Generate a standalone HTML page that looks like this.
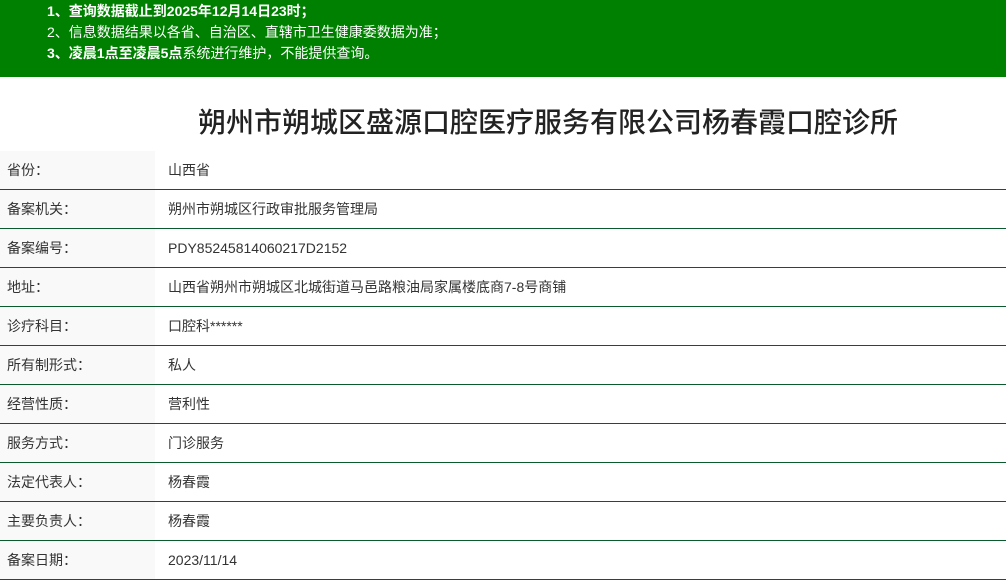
<!DOCTYPE html>
<html><head><meta charset="utf-8"><style>
*{margin:0;padding:0;box-sizing:border-box}
body{width:1006px;height:571px;overflow:hidden;background:#fff;font-family:"Liberation Sans","Noto Sans CJK SC",sans-serif;color:#333}
.top{background:#008000;height:77px;color:#fff;font-size:14px;padding:1px 0 0 47px}
.top div{height:21px;line-height:21px}
b{font-weight:bold}
h1{font-weight:500;font-size:28px;color:#222;text-align:center;height:74px;line-height:88px;padding-left:90px;font-family:"Noto Sans CJK SC",sans-serif}
.row{display:flex;height:39px;border-bottom:1px solid #0b5a2e;font-size:14px}
.l{width:155px;background:#f9f9f9;padding-left:7px;line-height:38px}
.v{padding-left:13px;line-height:38px}
</style></head><body>
<div class="top">
<div><b>1、查询数据截止到2025年12月14日23时；</b></div>
<div>2、信息数据结果以各省、自治区、直辖市卫生健康委数据为准；</div>
<div><b>3、凌晨1点至凌晨5点</b>系统进行维护，不能提供查询。</div>
</div>
<h1>朔州市朔城区盛源口腔医疗服务有限公司杨春霞口腔诊所</h1>
<div class="row"><div class="l">省份：</div><div class="v">山西省</div></div>
<div class="row"><div class="l">备案机关：</div><div class="v">朔州市朔城区行政审批服务管理局</div></div>
<div class="row"><div class="l">备案编号：</div><div class="v">PDY85245814060217D2152</div></div>
<div class="row"><div class="l">地址：</div><div class="v">山西省朔州市朔城区北城街道马邑路粮油局家属楼底商7-8号商铺</div></div>
<div class="row"><div class="l">诊疗科目：</div><div class="v">口腔科******</div></div>
<div class="row"><div class="l">所有制形式：</div><div class="v">私人</div></div>
<div class="row"><div class="l">经营性质：</div><div class="v">营利性</div></div>
<div class="row"><div class="l">服务方式：</div><div class="v">门诊服务</div></div>
<div class="row"><div class="l">法定代表人：</div><div class="v">杨春霞</div></div>
<div class="row"><div class="l">主要负责人：</div><div class="v">杨春霞</div></div>
<div class="row"><div class="l">备案日期：</div><div class="v">2023/11/14</div></div>
</body></html>
